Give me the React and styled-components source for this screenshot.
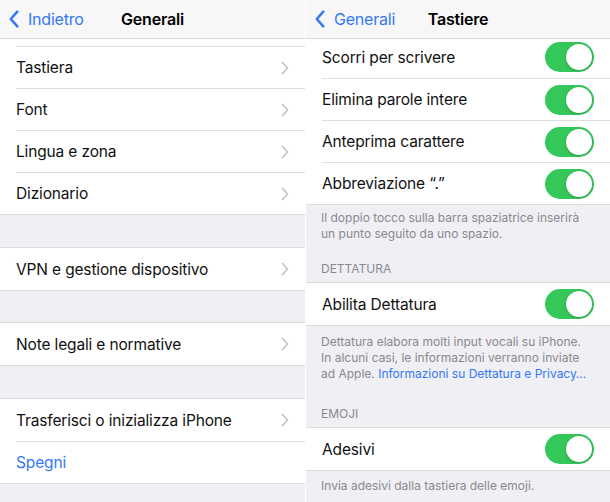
import React from "react";
import styled, { createGlobalStyle } from "styled-components";

const GlobalStyle = createGlobalStyle`
  html, body {
    margin: 0;
    padding: 0;
    background: #fff;
  }
  body {
    font-family: "Inter", "Liberation Sans", sans-serif;
    -webkit-font-smoothing: antialiased;
  }
`;

const Screen = styled.div`
  display: flex;
  gap: 1px;
  width: 610px;
  height: 502px;
  background: #fff;
  overflow: hidden;
`;

const Panel = styled.section`
  width: ${(p) => p.width}px;
  flex-shrink: 0;
  display: flex;
  flex-direction: column;
  background: #efeff4;
  overflow: hidden;
`;

const NavBar = styled.header`
  height: 38px;
  flex-shrink: 0;
  display: grid;
  grid-template-columns: 1fr auto 1fr;
  align-items: center;
  background: #f7f7f7;
  border-bottom: 1px solid #d6d6d9;
  position: relative;
  z-index: 1;
`;

const BackButton = styled.div`
  display: flex;
  align-items: center;
  gap: 9px;
  padding-left: 9px;
  color: #3478f6;
  font-size: 16px;
  letter-spacing: -0.2px;
  white-space: nowrap;
`;

const Title = styled.div`
  font-size: 16px;
  font-weight: 600;
  color: #000;
  letter-spacing: -0.2px;
`;

const Body = styled.div`
  flex: 1;
  overflow: hidden;
`;

const Content = styled.div`
  margin-top: ${(p) => -p.offset}px;
`;

const Group = styled.div`
  background: #fff;
  border-top: 1px solid #dcdce0;
  border-bottom: 1px solid #dcdce0;
`;

const Row = styled.div`
  box-sizing: border-box;
  height: 42px;
  margin-left: 16px;
  padding-right: 16px;
  display: flex;
  align-items: center;
  justify-content: space-between;
  font-size: 15.5px;
  letter-spacing: -0.15px;
  color: ${(p) => (p.action ? "#3478f6" : "#111")};

  & + & {
    border-top: 1px solid #dedee2;
  }
`;

const Gap = styled.div`
  height: ${(p) => p.size}px;
`;

const Footer = styled.div`
  padding: ${(p) => p.top}px 16px 0 15px;
  font-size: 12px;
  line-height: 16px;
  color: #8a8a8e;
`;

const Link = styled.span`
  color: #3478f6;
`;

const Header = styled.div`
  padding: ${(p) => p.top}px 16px 5px 15px;
  font-size: 12px;
  line-height: 16px;
  color: #8a8a8e;
  text-transform: uppercase;
`;

const Switch = styled.span`
  box-sizing: border-box;
  width: 49px;
  height: 30px;
  padding: 2px;
  border-radius: 15px;
  display: flex;
  justify-content: ${(p) => (p.on ? "flex-end" : "flex-start")};
  background: ${(p) => (p.on ? "#34c759" : "#e9e9eb")};
  flex-shrink: 0;
`;

const Knob = styled.span`
  width: 26px;
  height: 26px;
  border-radius: 50%;
  background: #fff;
  box-shadow: 0 1px 3px rgba(0, 0, 0, 0.18), 0 0 0 0.5px rgba(0, 0, 0, 0.06);
`;

const Chevron = () => (
  <svg width="8" height="14" viewBox="0 0 8 14">
    <path
      d="M1.5 1.5 L6.5 7 L1.5 12.5"
      fill="none"
      stroke="#c4c4c8"
      strokeWidth="1.7"
      strokeLinecap="round"
      strokeLinejoin="round"
    />
  </svg>
);

const BackChevron = () => (
  <svg width="10" height="18" viewBox="0 0 10 18">
    <path
      d="M8.3 1.6 L1.8 9 L8.3 16.4"
      fill="none"
      stroke="#3478f6"
      strokeWidth="2.5"
      strokeLinecap="round"
      strokeLinejoin="round"
    />
  </svg>
);

const Toggle = ({ on = true }) => (
  <Switch on={on}>
    <Knob />
  </Switch>
);

const Nav = ({ back, title }) => (
  <NavBar>
    <BackButton>
      <BackChevron />
      {back}
    </BackButton>
    <Title>{title}</Title>
    <span />
  </NavBar>
);

const LinkRow = ({ label }) => (
  <Row>
    {label}
    <Chevron />
  </Row>
);

const SwitchRow = ({ label }) => (
  <Row>
    {label}
    <Toggle on />
  </Row>
);

function App() {
  return (
    <>
      <GlobalStyle />
      <Screen>
        <Panel width={305}>
          <Nav back="Indietro" title="Generali" />
          <Body>
            <Content offset={36}>
              <Group>
                <LinkRow label="Data e ora" />
                <LinkRow label="Tastiera" />
                <LinkRow label="Font" />
                <LinkRow label="Lingua e zona" />
                <LinkRow label="Dizionario" />
              </Group>
              <Gap size={32} />
              <Group>
                <LinkRow label="VPN e gestione dispositivo" />
              </Group>
              <Gap size={31} />
              <Group>
                <LinkRow label="Note legali e normative" />
              </Group>
              <Gap size={32} />
              <Group>
                <LinkRow label="Trasferisci o inizializza iPhone" />
                <Row action>Spegni</Row>
              </Group>
            </Content>
          </Body>
        </Panel>

        <Panel width={304}>
          <Nav back="Generali" title="Tastiere" />
          <Body>
            <Content offset={4}>
              <Group>
                <SwitchRow label="Scorri per scrivere" />
                <SwitchRow label="Elimina parole intere" />
                <SwitchRow label="Anteprima carattere" />
                <SwitchRow label="Abbreviazione “.”" />
              </Group>
              <Footer top={5}>
                Il doppio tocco sulla barra spaziatrice inserirà un punto
                seguito da uno spazio.
              </Footer>
              <Header top={19}>Dettatura</Header>
              <Group>
                <SwitchRow label="Abilita Dettatura" />
              </Group>
              <Footer top={8}>
                Dettatura elabora molti input vocali su iPhone. In alcuni casi,
                le informazioni verranno inviate ad Apple.{" "}
                <Link>Informazioni su Dettatura e Privacy…</Link>
              </Footer>
              <Header top={24}>Emoji</Header>
              <Group>
                <SwitchRow label="Adesivi" />
              </Group>
              <Footer top={7}>Invia adesivi dalla tastiera delle emoji.</Footer>
            </Content>
          </Body>
        </Panel>
      </Screen>
    </>
  );
}

export default App;
